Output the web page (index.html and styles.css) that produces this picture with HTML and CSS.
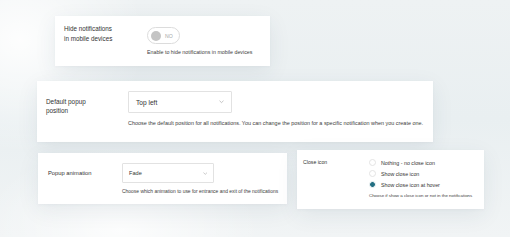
FILE: index.html
```html
<!DOCTYPE html>
<html>
<head>
<meta charset="utf-8">
<link rel="stylesheet" href="styles.css">
</head>
<body>
<div class="canvas">
  <section class="card card-mobile">
    <div class="label">Hide notifications<br>in mobile devices</div>
    <div class="control">
      <div class="toggle"><span class="knob"></span><span class="toggle-text">NO</span></div>
      <p class="help">Enable to hide notifications in mobile devices</p>
    </div>
  </section>

  <section class="card card-position">
    <div class="label">Default popup<br>position</div>
    <div class="control">
      <div class="select select-position"><span>Top left</span>
        <svg class="chev" viewBox="0 0 6 4" width="5" height="3.4"><path d="M0.6 0.8 L3 3.1 L5.4 0.8" fill="none" stroke="#a8a8a8" stroke-width="0.8"/></svg>
      </div>
      <p class="help">Choose the default position for all notifications. You can change the position for a specific notification when you create one.</p>
    </div>
  </section>

  <div class="row">
    <section class="card card-anim">
      <div class="label">Popup animation</div>
      <div class="control">
        <div class="select select-anim"><span>Fade</span>
          <svg class="chev" viewBox="0 0 6 4" width="4.5" height="3"><path d="M0.6 0.8 L3 3.1 L5.4 0.8" fill="none" stroke="#a8a8a8" stroke-width="0.8"/></svg>
        </div>
        <p class="help">Choose which animation to use for entrance and exit of the notifications</p>
      </div>
    </section>

    <section class="card card-close">
      <div class="label">Close icon</div>
      <div class="control">
        <div class="radio"><span class="dot"></span><span>Nothing - no close icon</span></div>
        <div class="radio"><span class="dot"></span><span>Show close icon</span></div>
        <div class="radio"><span class="dot checked"></span><span>Show close icon at hover</span></div>
        <p class="help">Choose if show a close icon or not in the notifications</p>
      </div>
    </section>
  </div>
</div>
</body>
</html>
```

FILE: styles.css
```css
html, body {
  margin: 0;
  padding: 0;
}
body {
  width: 510px;
  height: 237px;
  overflow: hidden;
  font-family: "Liberation Sans", Arial, sans-serif;
  color: #3a3a3a;
  background:
    radial-gradient(ellipse 180px 160px at 20px 40px, rgba(255,255,255,0.9), rgba(255,255,255,0) 70%),
    radial-gradient(ellipse 200px 120px at 120px 230px, rgba(255,255,255,0.8), rgba(255,255,255,0) 70%),
    linear-gradient(180deg, #eef2f3 0%, #e9eff1 50%, #f1f4f5 100%);
}
.canvas {
  display: flex;
  flex-direction: column;
  align-items: flex-start;
  padding-top: 16px;
}
.card {
  background: #fff;
  box-sizing: border-box;
  display: grid;
  align-items: start;
  box-shadow: 0 6px 22px rgba(40, 70, 90, 0.08), 0 1px 3px rgba(40, 70, 90, 0.04);
}
.help {
  margin: 0;
  color: #3d3d3d;
  white-space: nowrap;
}
.label {
  color: #333;
}

/* card 1 */
.card-mobile {
  margin-left: 55px;
  width: 215px;
  height: 50px;
  padding: 8px 9px 0 9px;
  grid-template-columns: 83px auto;
}
.card-mobile .label {
  font-size: 6.3px;
  line-height: 10px;
}
.toggle {
  margin-top: 3px;
  width: 33px;
  height: 17px;
  box-sizing: border-box;
  border: 1px solid #dcdcdc;
  border-radius: 9px;
  display: flex;
  align-items: center;
  padding-left: 3px;
  gap: 4px;
}
.knob {
  width: 10px;
  height: 10px;
  border-radius: 50%;
  background: #c4c4c4;
}
.toggle-text {
  font-size: 5.2px;
  color: #a8a8a8;
}
.card-mobile .help {
  margin-top: 5px;
  font-size: 5.3px;
  line-height: 6px;
}

/* card 2 */
.card-position {
  margin-top: 15px;
  margin-left: 37px;
  width: 396px;
  height: 61px;
  padding: 10px 9px 0 9px;
  grid-template-columns: 82px auto;
}
.card-position .label {
  margin-top: 6px;
  font-size: 6.4px;
  line-height: 9px;
}
.select {
  box-sizing: border-box;
  border: 1px solid #e2e2e2;
  border-radius: 1px;
  display: flex;
  align-items: center;
  justify-content: space-between;
  color: #333;
}
.select-position {
  width: 104px;
  height: 22px;
  padding: 0 7px 0 7px;
  font-size: 6.6px;
}
.card-position .help {
  margin-top: 7px;
  font-size: 5.45px;
  line-height: 6px;
}

/* row 3 */
.row {
  display: flex;
  align-items: flex-start;
  margin-top: 8px;
}
.card-anim {
  margin-left: 38px;
  margin-top: 3px;
  width: 249px;
  height: 51px;
  padding: 10px 10px 0 10px;
  grid-template-columns: 74px auto;
}
.card-anim .label {
  font-size: 5.8px;
  line-height: 20px;
}
.select-anim {
  width: 92px;
  height: 20px;
  padding: 0 6px 0 6px;
  font-size: 5.6px;
}
.card-anim .help {
  margin-top: 6px;
  font-size: 4.95px;
  line-height: 6px;
}

.card-close {
  margin-left: 10px;
  width: 187px;
  height: 59px;
  padding: 7px 6px 0 6px;
  grid-template-columns: 66px auto;
}
.card-close .label {
  font-size: 5.2px;
  line-height: 10px;
}
.radio {
  display: flex;
  align-items: center;
  gap: 5px;
  height: 11px;
  font-size: 5.3px;
  color: #333;
}
.dot {
  width: 7px;
  height: 7px;
  box-sizing: border-box;
  border-radius: 50%;
  border: 1px solid #e4e4e4;
  background: #fff;
}
.dot.checked {
  border: 1px solid #dbe7ea;
  background: radial-gradient(circle, #236f82 0 2.4px, #fff 2.6px);
}
.card-close .help {
  margin-top: 3px;
  font-size: 4.4px;
  line-height: 6px;
}
```
